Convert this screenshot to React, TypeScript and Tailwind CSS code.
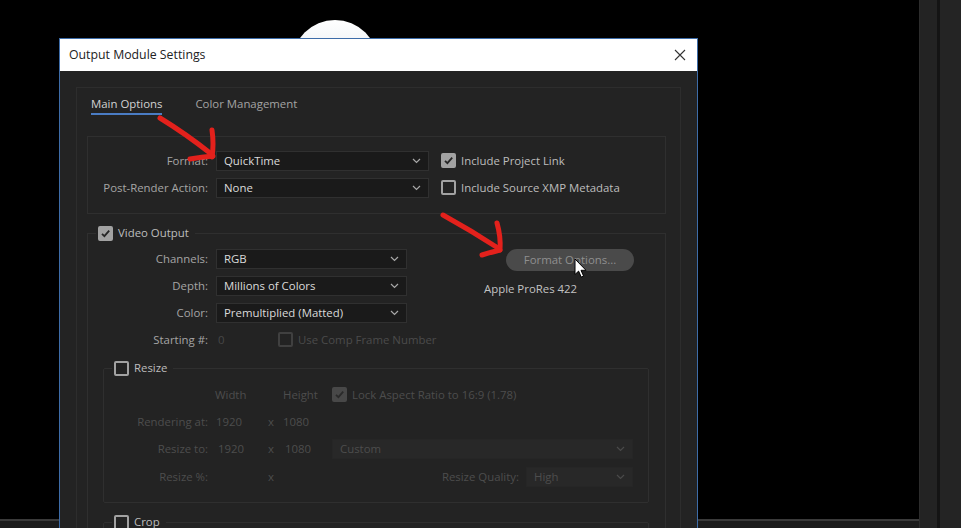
import clsx from "clsx";

const ui = "font-['Open_Sans','Noto_Sans',sans-serif]";

function Chevron({ dim = false }: { dim?: boolean }) {
  return (
    <svg width="9" height="6" viewBox="0 0 9 6" className={dim ? "text-[#4a4a4a]" : "text-[#a8a8a8]"}>
      <path d="M1 1l3.5 3.5L8 1" fill="none" stroke="currentColor" strokeWidth="1.2" />
    </svg>
  );
}

function Select({ value, width, dim = false }: { value: string; width: string; dim?: boolean }) {
  return (
    <div
      className={clsx(
        "flex h-[20px] shrink-0 items-center justify-between border pl-[7px] pr-[7px]",
        width,
        dim ? "border-[#262626] bg-[#282828] text-[#4d4d4d]" : "border-[#303030] bg-[#1a1a1a] text-[#dadada]"
      )}
    >
      <span>{value}</span>
      <Chevron dim={dim} />
    </div>
  );
}

function Check({ checked = false, dim = false }: { checked?: boolean; dim?: boolean }) {
  return (
    <span
      className={clsx(
        "flex h-[15px] w-[15px] shrink-0 items-center justify-center rounded-[2px] border-2",
        dim
          ? checked
            ? "border-[#484848] bg-[#484848]"
            : "border-[#404040]"
          : checked
            ? "border-[#a2a2a2] bg-[#a2a2a2]"
            : "border-[#a2a2a2]"
      )}
    >
      {checked && (
        <svg width="11" height="11" viewBox="0 0 11 11">
          <path
            d="M2 5.8l2.4 2.4L9.2 2.6"
            fill="none"
            stroke={dim ? "#2a2a2a" : "#262626"}
            strokeWidth="1.8"
          />
        </svg>
      )}
    </span>
  );
}

function Legend({ label, checked = false }: { label: string; checked?: boolean }) {
  return (
    <legend className="ml-[8px] flex h-[16px] items-center gap-[5px] pl-[2px] pr-[6px] text-[#bdbdbd]">
      <Check checked={checked} />
      <span className="leading-[16px]">{label}</span>
    </legend>
  );
}

function Cursor() {
  return (
    <svg width="13" height="21" viewBox="0 0 13 21" className="absolute left-[574px] top-[258px]">
      <path
        d="M1 1v15.5l3.6-3.4 2.6 6 2.4-1-2.6-5.8H12z"
        fill="#fff"
        stroke="#000"
        strokeWidth="1"
        strokeLinejoin="round"
      />
    </svg>
  );
}

function Arrows() {
  return (
    <svg width="961" height="528" className="pointer-events-none absolute left-0 top-0">
      <g fill="none" stroke="#e3211c" strokeWidth="5" strokeLinecap="round" strokeLinejoin="round">
        <path d="M160 118 Q186 134 210 153" />
        <path d="M212 130 Q214 144 212 157" />
        <path d="M190 159 Q202 157 213 156" />
        <path d="M443 215 Q472 231 498 248" />
        <path d="M497 223 Q501 237 500 250" />
        <path d="M482 255 Q492 252 500 250" />
      </g>
    </svg>
  );
}

export default function App() {
  return (
    <div className={clsx("relative h-[528px] w-[961px] overflow-hidden bg-black text-[11.4px]", ui)}>
      {/* desktop behind the dialog */}
      <div className="absolute left-[292px] top-[20px] h-[86px] w-[86px] rounded-full bg-gradient-to-b from-white to-[#cfd8e2]" />
      <div className="absolute left-0 top-[519px] h-[2px] w-[919px] bg-[#3a3a3a]" />
      <div className="absolute left-0 top-[521px] h-[7px] w-[919px] bg-[#1c1c1c]" />
      <div className="absolute right-0 top-0 flex h-[528px] w-[42px]">
        <div className="w-[18px] border-l border-[#2c2c2c] bg-[#232323]" />
        <div className="w-[3px] bg-[#141414]" />
        <div className="flex-1 bg-[#242424]" />
      </div>

      {/* dialog */}
      <div className="absolute left-[59px] top-[38px] flex h-[500px] w-[639px] flex-col overflow-hidden border border-[#3d6ca8] bg-[#232323]">
        <div className="flex h-[32px] shrink-0 items-center justify-between bg-white pl-[9px] pr-[11px]">
          <span className="text-[12.3px] text-[#222]">Output Module Settings</span>
          <svg width="12" height="12" viewBox="0 0 12 12">
            <path d="M1 1l10 10M11 1L1 11" stroke="#333" strokeWidth="1.1" />
          </svg>
        </div>

        <div className="flex-1 px-[16px] pt-[16px]">
          <div className="h-full border border-[#2d2d2d] pl-[10px] pr-[14px] pt-[8px]">
            {/* tabs */}
            <div className="ml-[4px] flex gap-[33px] leading-[16px]">
              <div className="flex flex-col">
                <span className="text-[#d2d2d2]">Main Options</span>
                <span className="mt-[1px] h-[2px] bg-[#4a7cc4]" />
              </div>
              <span className="text-[#a3a3a3]">Color Management</span>
            </div>

            {/* format group */}
            <div className="mt-[21px] flex flex-col gap-[7px] border border-[#2f2f2f] pb-[15px] pt-[14px]">
              <div className="flex items-center">
                <span className="w-[120px] text-right text-[#a5a5a5]">Format:</span>
                <span className="ml-[8px]">
                  <Select value="QuickTime" width="w-[213px]" />
                </span>
                <span className="ml-[12px] flex items-center gap-[5px] text-[#bdbdbd]">
                  <Check checked />
                  Include Project Link
                </span>
              </div>
              <div className="flex items-center">
                <span className="w-[120px] text-right text-[#a5a5a5]">Post-Render Action:</span>
                <span className="ml-[8px]">
                  <Select value="None" width="w-[213px]" />
                </span>
                <span className="ml-[12px] flex items-center gap-[5px] text-[#bdbdbd]">
                  <Check />
                  Include Source XMP Metadata
                </span>
              </div>
            </div>

            {/* video output */}
            <fieldset className="mt-[11px] border border-[#2f2f2f] pb-[20px] pt-[8px]">
              <Legend label="Video Output" checked />
              <div className="flex">
                <div className="flex w-[350px] flex-col gap-[7px]">
                  {[
                    ["Channels:", "RGB"],
                    ["Depth:", "Millions of Colors"],
                    ["Color:", "Premultiplied (Matted)"],
                  ].map(([label, value]) => (
                    <div key={label} className="flex items-center">
                      <span className="w-[120px] text-right text-[#a5a5a5]">{label}</span>
                      <span className="ml-[8px]">
                        <Select value={value} width="w-[191px]" />
                      </span>
                    </div>
                  ))}
                  <div className="flex h-[19px] items-center">
                    <span className="w-[120px] text-right text-[#a5a5a5]">Starting #:</span>
                    <span className="ml-[10px] w-[60px] text-[#474747]">0</span>
                    <span className="flex items-center gap-[5px] whitespace-nowrap text-[#4b4b4b]">
                      <Check dim />
                      Use Comp Frame Number
                    </span>
                  </div>
                </div>
                <div className="ml-[46px] flex flex-col items-start">
                  <button className="ml-[22px] h-[22px] w-[128px] rounded-full bg-[#4a4a4a] text-[#8f8f8f]">
                    Format Options...
                  </button>
                  <span className="mt-[10px] leading-[16px] text-[#c2c2c2]">Apple ProRes 422</span>
                </div>
              </div>

              {/* resize */}
              <fieldset className="ml-[15px] mr-[16px] mt-[11px] rounded-[2px] border border-[#2f2f2f] pb-[15px] pr-[15px] pt-[9px]">
                <Legend label="Resize" />
                <div className="flex flex-col gap-[7px] text-[#4d4d4d]">
                  <div className="flex h-[20px] items-center">
                    <span className="w-[104px]" />
                    <span className="ml-[7px] w-[68px]">Width</span>
                    <span className="w-[49px]">Height</span>
                    <span className="flex items-center gap-[5px]">
                      <Check checked dim />
                      Lock Aspect Ratio to 16:9 (1.78)
                    </span>
                  </div>
                  <div className="flex h-[20px] items-center">
                    <span className="w-[104px] text-right">Rendering at:</span>
                    <span className="ml-[8px] w-[52px]">1920</span>
                    <span className="w-[15px]">x</span>
                    <span className="w-[49px]">1080</span>
                  </div>
                  <div className="flex h-[20px] items-center">
                    <span className="w-[104px] text-right">Resize to:</span>
                    <span className="ml-[8px] w-[52px] pl-[2px]">1920</span>
                    <span className="w-[15px]">x</span>
                    <span className="w-[49px] pl-[2px]">1080</span>
                    <Select value="Custom" width="flex-1" dim />
                  </div>
                  <div className="flex h-[21px] items-center">
                    <span className="w-[104px] text-right">Resize %:</span>
                    <span className="ml-[8px] w-[52px]" />
                    <span className="w-[15px]">x</span>
                    <span className="flex flex-1 items-center justify-end gap-[7px]">
                      Resize Quality:
                      <Select value="High" width="w-[107px]" dim />
                    </span>
                  </div>
                </div>
              </fieldset>

              {/* crop */}
              <fieldset className="ml-[15px] mr-[16px] mt-[11px] h-[60px] rounded-[2px] border border-[#2f2f2f]">
                <Legend label="Crop" />
              </fieldset>
            </fieldset>
          </div>
        </div>
      </div>

      <Cursor />
      <Arrows />
    </div>
  );
}
